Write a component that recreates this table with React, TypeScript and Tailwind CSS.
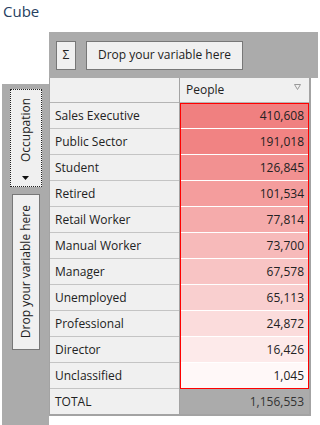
import React from "react"

interface Row {
  label: string
  value: string
  bg: string
}

// heat colours run from the largest count down to the smallest
const rows: Row[] = [
  { label: "Sales Executive", value: "410,608", bg: "bg-[#f08080]" },
  { label: "Public Sector", value: "191,018", bg: "bg-[#f18383]" },
  { label: "Student", value: "126,845", bg: "bg-[#f29191]" },
  { label: "Retired", value: "101,534", bg: "bg-[#f49d9d]" },
  { label: "Retail Worker", value: "77,814", bg: "bg-[#f5abab]" },
  { label: "Manual Worker", value: "73,700", bg: "bg-[#f7baba]" },
  { label: "Manager", value: "67,578", bg: "bg-[#f8c4c4]" },
  { label: "Unemployed", value: "65,113", bg: "bg-[#f9cfcf]" },
  { label: "Professional", value: "24,872", bg: "bg-[#fbdcdc]" },
  { label: "Director", value: "16,426", bg: "bg-[#fdeaea]" },
  { label: "Unclassified", value: "1,045", bg: "bg-[#fff8f8]" },
]

export default function App() {
  return (
    <div className="w-[320px] h-[425px] overflow-hidden bg-white font-['Open_Sans',sans-serif] text-[12px] text-[#222]">
      <div className="h-[32px] pl-[3px] text-[15px] text-[#26405f]">Cube</div>

      {/* column drop zone */}
      <div className="flex">
        <div className="w-[49px] shrink-0" />
        <div className="w-[269px] h-[46px] bg-[#ababab] flex items-center gap-[10px] pl-[7px]">
          <div className="w-[20px] h-[29px] bg-[#f0f0f0] border border-[#777] flex items-center justify-center text-[12px]">
            Σ
          </div>
          <div className="w-[157px] h-[29px] bg-[#f0f0f0] border border-[#777] flex items-center justify-center">
            Drop your variable here
          </div>
        </div>
      </div>

      <div className="flex h-[347px]">
        {/* row drop zone */}
        <div className="w-[49px] shrink-0 flex flex-col pt-[6px]">
          <div className="ml-[2px] flex-1 bg-[#ababab] flex flex-col pt-[5px]">
            <div className="ml-[8px] w-[32px] h-[98px] bg-[#f0f0f0] border border-dotted border-[#222] flex flex-col items-center pt-[8px]">
              <span className="[writing-mode:vertical-rl] rotate-180 leading-none h-[64px] flex items-center">Occupation</span>
              <svg width="8" height="5" viewBox="0 0 8 5" className="mt-[14px]">
                <path d="M0 0h7L3.5 4z" fill="#111" />
              </svg>
            </div>
            <div className="ml-[10px] mt-[7px] w-[28px] h-[156px] bg-[#f0f0f0] border border-[#777] flex items-center justify-center">
              <span className="[writing-mode:vertical-rl] rotate-180 leading-none whitespace-nowrap">Drop your variable here</span>
            </div>
          </div>
        </div>

        {/* pivot grid */}
        <div className="self-start flex border-l border-r-2 border-b-2 border-[#a3a3a3]">
          <div className="w-[130px] flex flex-col border-r border-[#a3a3a3] bg-[#f0f0f0]">
            <div className="h-[25px] border-b border-[#b4b4b4]" />
            {rows.map((r) => (
              <div key={r.label} className="h-[26px] border-b border-[#c4c4c4] flex items-center pl-[5px]">
                {r.label}
              </div>
            ))}
            <div className="h-[25px] flex items-center pl-[5px]">TOTAL</div>
          </div>

          <div className="w-[129px] flex flex-col">
            <div className="h-[25px] border-b border-[#b4b4b4] bg-[#f0f0f0] flex items-center justify-between pl-[6px] pr-[8px]">
              <span>People</span>
              <svg width="7" height="6" viewBox="0 0 7 6" className="-mt-[6px]">
                <path d="M0.5 0.5h6L3.5 5.5z" fill="none" stroke="#999" strokeWidth="1" />
              </svg>
            </div>
            <div className="[outline:1px_solid_#ff0000] [outline-offset:-1px] flex flex-col">
              {rows.map((r) => (
                <div key={r.label} className={`h-[26px] border-b border-white flex items-center justify-end pr-[5px] ${r.bg}`}>
                  {r.value}
                </div>
              ))}
            </div>
            <div className="h-[25px] bg-[#ababab] flex items-center justify-end pr-[5px] text-[#333]">1,156,553</div>
          </div>
        </div>
      </div>
    </div>
  )
}
